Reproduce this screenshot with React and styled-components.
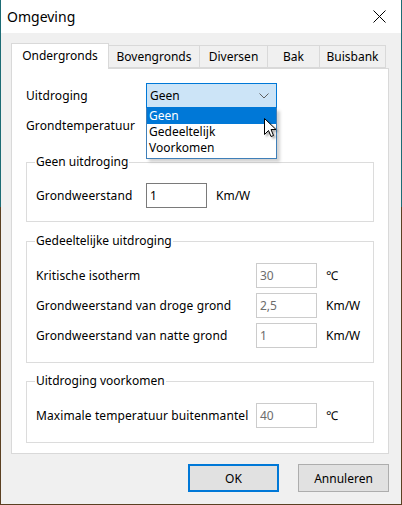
import React from "react";
import styled, { createGlobalStyle } from "styled-components";

const GlobalStyle = createGlobalStyle`
  body {
    margin: 0;
    font-family: "Segoe UI", "Noto Sans", "Liberation Sans", sans-serif;
    font-size: 12px;
    color: #000;
  }
`;

const Window = styled.div`
  width: 402px;
  height: 505px;
  box-sizing: border-box;
  padding: 0 1px 1px 1px;
  background: linear-gradient(to bottom, #1d6c75 0, #1d6c75 207px, #5b4022 207px);
  display: flex;
  flex-direction: column;
`;

const Inner = styled.div`
  flex: 1;
  display: flex;
  flex-direction: column;
  background: #f0f0f0;
`;

const TitleBar = styled.div`
  height: 33px;
  flex: none;
  background: #fff;
  display: flex;
  align-items: center;
  justify-content: space-between;
  padding: 0 15px 0 6px;
`;

const Title = styled.span`
  font-size: 14px;
  margin-top: -1px;
`;

const Body = styled.div`
  padding: 10px 12px 0 10px;
  display: flex;
  flex-direction: column;
`;

const TabRow = styled.div`
  display: flex;
  align-items: flex-end;
  height: 25px;
  position: relative;
  z-index: 1;
`;

const Tab = styled.div`
  box-sizing: border-box;
  width: ${(p) => p.$w}px;
  height: ${(p) => (p.$active ? 26 : 23)}px;
  margin-bottom: ${(p) => (p.$active ? -1 : 0)}px;
  background: ${(p) => (p.$active ? "#fff" : "#f0f0f0")};
  border: 1px solid #d9d9d9;
  border-bottom: ${(p) => (p.$active ? "none" : "1px solid #d9d9d9")};
  margin-left: ${(p) => (p.$first ? 0 : -1)}px;
  display: flex;
  align-items: center;
  justify-content: center;
  padding-bottom: ${(p) => (p.$active ? 2 : 0)}px;
  white-space: nowrap;
`;

const Panel = styled.div`
  box-sizing: border-box;
  width: 378px;
  height: 386px;
  background: #fff;
  border: 1px solid #d9d9d9;
  padding: 14px 14px 0 14px;
  display: flex;
  flex-direction: column;
`;

const Row = styled.div`
  display: flex;
  align-items: center;
  height: 25px;
  margin-top: ${(p) => p.$mt || 0}px;
`;

const Label = styled.span`
  width: ${(p) => p.$w}px;
  flex: none;
  white-space: nowrap;
  letter-spacing: 0.1px;
`;

const ComboWrap = styled.div`
  position: relative;
  width: 131px;
  height: 25px;
`;

const Combo = styled.div`
  box-sizing: border-box;
  height: 25px;
  border: 1px solid #0078d7;
  background: #cce4f7;
  display: flex;
  align-items: center;
  justify-content: space-between;
  padding: 0 7px 0 3px;
`;

const DropList = styled.div`
  position: absolute;
  top: 100%;
  left: 0;
  width: 131px;
  box-sizing: border-box;
  background: #fff;
  border: 1px solid #3f7fb8;
  border-top: none;
  padding: 0 0 2px 0;
  box-shadow: 3px 3px 3px rgba(0, 0, 0, 0.18);
  z-index: 5;
`;

const DropItem = styled.div`
  height: 16px;
  line-height: 16px;
  padding-left: 2px;
  background: ${(p) => (p.$selected ? "#0078d7" : "transparent")};
  color: ${(p) => (p.$selected ? "#fff" : "#000")};
`;

const Cursor = styled.svg`
  position: absolute;
  left: 117px;
  top: 10px;
  filter: drop-shadow(2px 2px 1px rgba(0, 0, 0, 0.3));
`;

const Group = styled.fieldset`
  margin: ${(p) => p.$mt || 0}px 0 0 0;
  padding: ${(p) => p.$pt}px 9px ${(p) => p.$pb}px 9px;
  border: 1px solid #dcdcdc;
  min-width: 0;
  display: flex;
  flex-direction: column;
  gap: 5px;
`;

const Legend = styled.legend`
  padding: 0 1px;
  margin-left: -1px;
  line-height: 16px;
`;

const Input = styled.div`
  box-sizing: border-box;
  width: 61px;
  height: 25px;
  flex: none;
  border: 1px solid ${(p) => (p.$disabled ? "#cccccc" : "#7a7a7a")};
  color: ${(p) => (p.$disabled ? "#6d6d6d" : "#000")};
  background: #fff;
  display: flex;
  align-items: center;
  padding-left: 3px;
`;

const Unit = styled.span`
  margin-left: 9px;
`;

const ButtonRow = styled.div`
  display: flex;
  justify-content: flex-end;
  gap: 19px;
  margin-top: 10px;
`;

const Button = styled.div`
  box-sizing: border-box;
  width: 91px;
  height: 28px;
  background: #e1e1e1;
  border: ${(p) => (p.$default ? "2px solid #0078d7" : "1px solid #adadad")};
  display: flex;
  align-items: center;
  justify-content: center;
`;

const tabs = [
  { label: "Ondergronds", w: 98, active: true },
  { label: "Bovengronds", w: 92 },
  { label: "Diversen", w: 69 },
  { label: "Bak", w: 53 },
  { label: "Buisbank", w: 67 },
];

const partial = [
  { label: "Kritische isotherm", value: "30", unit: "\u2103" },
  { label: "Grondweerstand van droge grond", value: "2,5", unit: "Km/W" },
  { label: "Grondweerstand van natte grond", value: "1", unit: "Km/W" },
];

export default function App() {
  return (
    <>
      <GlobalStyle />
      <Window>
        <Inner>
          <TitleBar>
            <Title>Omgeving</Title>
            <svg width="13" height="13" viewBox="0 0 13 13">
              <path d="M0.5 0.5 L12.5 12.5 M12.5 0.5 L0.5 12.5" stroke="#000" strokeWidth="1" fill="none" />
            </svg>
          </TitleBar>
          <Body>
            <TabRow>
              {tabs.map((t, i) => (
                <Tab key={t.label} $w={t.w} $active={t.active} $first={i === 0}>
                  {t.label}
                </Tab>
              ))}
            </TabRow>
            <Panel>
              <Row>
                <Label $w={120}>Uitdroging</Label>
                <ComboWrap>
                  <Combo>
                    <span>Geen</span>
                    <svg width="10" height="6" viewBox="0 0 10 6">
                      <path d="M0.5 0.5 L5 5 L9.5 0.5" stroke="#606060" strokeWidth="1" fill="none" />
                    </svg>
                  </Combo>
                  <DropList>
                    <DropItem $selected>Geen</DropItem>
                    <DropItem>Gedeeltelijk</DropItem>
                    <DropItem>Voorkomen</DropItem>
                    <Cursor width="13" height="21" viewBox="0 0 13 21">
                      <path
                        d="M0.5 0.5 L0.5 16.5 L4.5 12.5 L7 18.5 L9.5 17.5 L7 11.5 L12 11.5 Z"
                        fill="#fff"
                        stroke="#000"
                        strokeWidth="1"
                      />
                    </Cursor>
                  </DropList>
                </ComboWrap>
              </Row>
              <Row $mt={5}>
                <Label $w={120}>Grondtemperatuur</Label>
              </Row>

              <Group $mt={16} $pt={13} $pb={13}>
                <Legend>Geen uitdroging</Legend>
                <Row>
                  <Label $w={110}>Grondweerstand</Label>
                  <Input>1</Input>
                  <Unit>Km/W</Unit>
                </Row>
              </Group>

              <Group $mt={11} $pt={14} $pb={14}>
                <Legend>Gedeeltelijke uitdroging</Legend>
                {partial.map((r) => (
                  <Row key={r.label}>
                    <Label $w={220}>{r.label}</Label>
                    <Input $disabled>{r.value}</Input>
                    <Unit>{r.unit}</Unit>
                  </Row>
                ))}
              </Group>

              <Group $mt={10} $pt={14} $pb={14}>
                <Legend>Uitdroging voorkomen</Legend>
                <Row>
                  <Label $w={220}>Maximale temperatuur buitenmantel</Label>
                  <Input $disabled>40</Input>
                  <Unit>{"\u2103"}</Unit>
                </Row>
              </Group>
            </Panel>
            <ButtonRow>
              <Button $default>OK</Button>
              <Button>Annuleren</Button>
            </ButtonRow>
          </Body>
        </Inner>
      </Window>
    </>
  );
}
